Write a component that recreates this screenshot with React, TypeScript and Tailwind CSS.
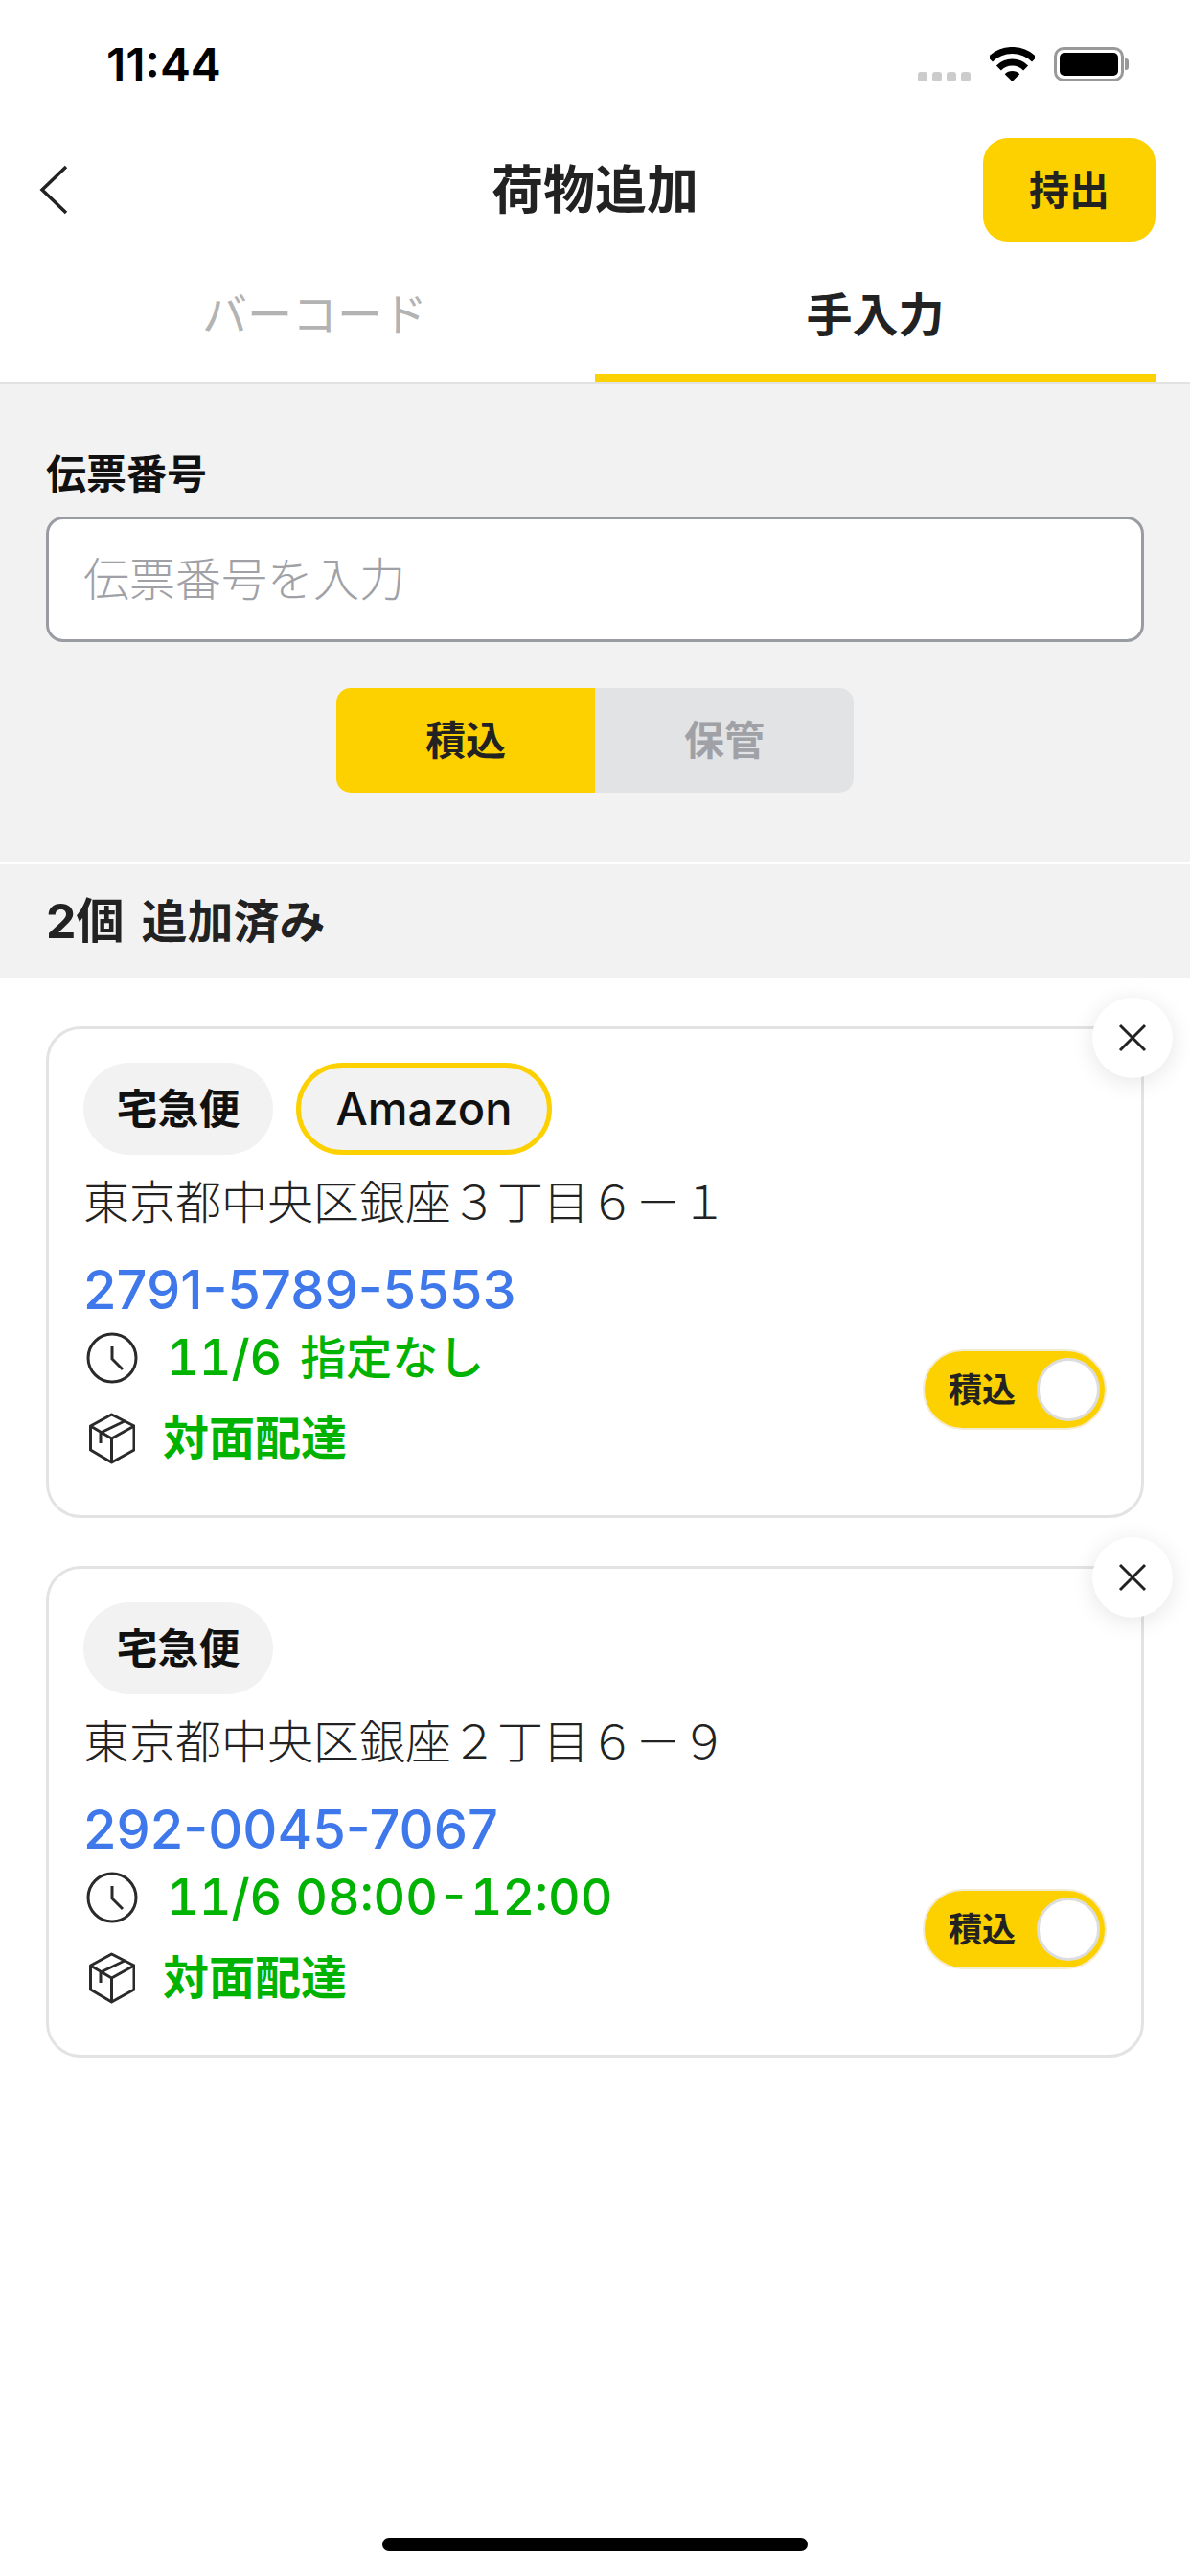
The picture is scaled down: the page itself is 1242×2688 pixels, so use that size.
import { useState } from 'react';

interface Parcel {
  id: string;
  shipper?: string;
  address: string;
  tracking: string;
  slot: string;
  slotNote?: string;
}

const parcels: Parcel[] = [
  { id: '1', shipper: 'Amazon', address: '東京都中央区銀座３丁目６－１', tracking: '2791-5789-5553', slot: '11/6', slotNote: '指定なし' },
  { id: '2', address: '東京都中央区銀座２丁目６－９', tracking: '292-0045-7067', slot: '11/6 08:00-12:00' },
];

function StatusBar() {
  return (
    <div className="flex h-[136px] justify-between pl-[111px] pr-[64px] pt-[42px]">
      <span className="text-[48px] leading-[52px] font-semibold text-black">11:44</span>
      <div className="flex items-start pt-[7px]">
        <div className="mt-[26px] flex gap-[5px]">
          <span className="h-[10px] w-[10px] rounded-[3px] bg-[#cccccc]" />
          <span className="h-[10px] w-[10px] rounded-[3px] bg-[#cccccc]" />
          <span className="h-[10px] w-[10px] rounded-[3px] bg-[#cccccc]" />
          <span className="h-[10px] w-[10px] rounded-[3px] bg-[#cccccc]" />
        </div>
        <svg className="ml-[20px]" width="47" height="36" viewBox="0 0 47 36">
          <path d="M0.5 13A32.5 32.5 0 0 1 46.5 13" fill="none" stroke="#000" strokeWidth="7" />
          <path d="M9.4 21.9A20 20 0 0 1 37.6 21.9" fill="none" stroke="#000" strokeWidth="7" />
          <path d="M23.5 36L15.7 28.2A11 11 0 0 1 31.3 28.2Z" fill="#000" />
        </svg>
        <div className="ml-[20px] flex items-center">
          <div className="flex h-[36px] w-[73px] rounded-[10px] border-[3px] border-[#999999] p-[3px]">
            <div className="flex-1 rounded-[5px] bg-black" />
          </div>
          <div className="ml-[1px] h-[12px] w-[4px] rounded-r-[3px] bg-[#999999]" />
        </div>
      </div>
    </div>
  );
}

function Header() {
  return (
    <div className="mt-[8px] grid h-[108px] grid-cols-[1fr_auto_1fr] items-center px-[36px]">
      <svg className="ml-[5px]" width="30" height="52" viewBox="0 0 30 52">
        <path d="M28 2L3 26L28 50" fill="none" stroke="#222222" strokeWidth="3.5" />
      </svg>
      <h1 className="mt-[2px] text-[54px] leading-[64px] font-bold text-[#222222]">荷物追加</h1>
      <button className="h-[108px] w-[180px] justify-self-end rounded-[26px] bg-[#fdd000] text-[42px] font-bold text-[#222222]">
        持出
      </button>
    </div>
  );
}

function Tabs() {
  return (
    <div className="flex h-[149px] border-b-[2px] border-[#e2e2e2] px-[36px]">
      <div className="flex w-[585px] items-center justify-center pt-[6px] text-[47px] text-[#b3b3b3]">バーコード</div>
      <div className="flex w-[585px] items-center justify-center border-b-[9px] border-[#fdd000] pt-[15px] text-[48px] font-bold text-[#222222]">
        手入力
      </div>
    </div>
  );
}

function EntryForm() {
  return (
    <div className="h-[498px] bg-[#f2f2f2] px-[48px] pt-[69px]">
      <label className="block text-[42px] leading-[50px] font-bold text-[#111111]">伝票番号</label>
      <div className="mt-[19px] flex h-[131px] items-center rounded-[18px] border-[3px] border-[#9a9ca3] bg-white pl-[36px] text-[48px] font-light text-[#a0a1a6]">
        伝票番号を入力
      </div>
      <div className="mt-[48px] flex justify-center">
        <div className="flex h-[109px] w-[540px] overflow-hidden rounded-[15px] text-[42px] font-bold">
          <div className="flex flex-1 items-center justify-center bg-[#fdd000] text-[#222222]">積込</div>
          <div className="flex flex-1 items-center justify-center bg-[#e2e3e5] text-[#a0a1a6]">保管</div>
        </div>
      </div>
    </div>
  );
}

function CloseButton() {
  return (
    <button className="absolute right-[-33px] top-[-33px] flex h-[84px] w-[84px] items-center justify-center rounded-full bg-white shadow-[0_4px_24px_rgba(0,0,0,0.10)]">
      <svg width="30" height="30" viewBox="0 0 30 30">
        <path d="M2 2L28 28M28 2L2 28" fill="none" stroke="#222222" strokeWidth="3" />
      </svg>
    </button>
  );
}

function ClockIcon() {
  return (
    <svg width="54" height="54" viewBox="0 0 54 54">
      <circle cx="27" cy="27" r="25" fill="none" stroke="#2a2a2a" strokeWidth="3" />
      <path d="M27 15V28L38 39" fill="none" stroke="#2a2a2a" strokeWidth="3" />
    </svg>
  );
}

function BoxIcon() {
  return (
    <svg width="48" height="54" viewBox="0 0 48 54">
      <path
        d="M23.5 2L47 14V39L23.5 52L1.5 39V14ZM1.5 14L23.5 27L47 14M23.5 27V52M38 8.500L12 21V32"
        fill="none"
        stroke="#2a2a2a"
        strokeWidth="3"
        strokeLinejoin="round"
      />
    </svg>
  );
}

function LoadToggle() {
  const [on, setOn] = useState(true);
  return (
    <button
      onClick={() => setOn(!on)}
      className="flex h-[84px] w-[192px] items-center justify-between rounded-full border-[2px] border-[#f3ecd0] bg-[#fdd000] pl-[25px] pr-[5px]"
    >
      <span className="text-[35px] leading-none font-bold text-[#222222]">積込</span>
      <span className="h-[66px] w-[66px] rounded-full border-[3px] border-[#dddddd] bg-white" />
    </button>
  );
}

function ParcelCard({ parcel }: { parcel: Parcel }) {
  return (
    <div className="relative h-[513px] rounded-[36px] border-[3px] border-[#e3e3e3] pl-[36px] pr-[36px] pt-[35px]">
      <CloseButton />
      <div className="flex gap-[24px]">
        <span className="flex h-[96px] w-[198px] items-center justify-center rounded-full bg-[#f2f2f2] text-[43px] font-bold text-[#111111]">
          宅急便
        </span>
        {parcel.shipper && (
          <span className="flex h-[96px] w-[267px] items-center justify-center rounded-full border-[5px] border-[#fdd000] bg-[#f2f2f2] text-[47px] font-medium text-[#111111]">
            {parcel.shipper}
          </span>
        )}
      </div>
      <p className="mt-[15px] text-[48px] leading-[70px] font-light text-[#222222]">{parcel.address}</p>
      <p className="mt-[21px] text-[56px] leading-[70px] font-medium text-[#3f78ea]">{parcel.tracking}</p>
      <div className="flex items-start justify-between">
        <div>
          <div className="mt-[5px] flex h-[62px] items-center gap-[30px] pl-[3px]">
            <ClockIcon />
            <span className="flex items-center gap-[19px] text-[52px] font-medium tabular-nums text-[#00b300]">
              {parcel.slot}
              {parcel.slotNote && <span className="text-[48px]">{parcel.slotNote}</span>}
            </span>
          </div>
          <div className="mt-[22px] flex h-[62px] items-center gap-[29px] pl-[6px]">
            <BoxIcon />
            <span className="text-[48px] font-bold text-[#00b300]">対面配達</span>
          </div>
        </div>
        <div className="mt-[27px]">
          <LoadToggle />
        </div>
      </div>
    </div>
  );
}

export default function App() {
  return (
    <div className="relative flex h-[2688px] w-[1242px] flex-col overflow-hidden bg-white font-['Inter','Noto_Sans_CJK_JP',sans-serif]">
      <StatusBar />
      <Header />
      <Tabs />
      <EntryForm />
      <div className="mt-[3px] flex h-[119px] items-center gap-[18px] bg-[#f2f2f2] px-[48px] font-bold text-[#222222]">
        <span className="text-[50px]">2個</span>
        <span className="text-[48px]">追加済み</span>
      </div>
      <div className="flex flex-col gap-[50px] px-[48px] pt-[50px]">
        {parcels.map((parcel) => (
          <ParcelCard key={parcel.id} parcel={parcel} />
        ))}
      </div>
      <div className="absolute bottom-[26px] left-[399px] h-[14px] w-[444px] rounded-full bg-black" />
    </div>
  );
}
